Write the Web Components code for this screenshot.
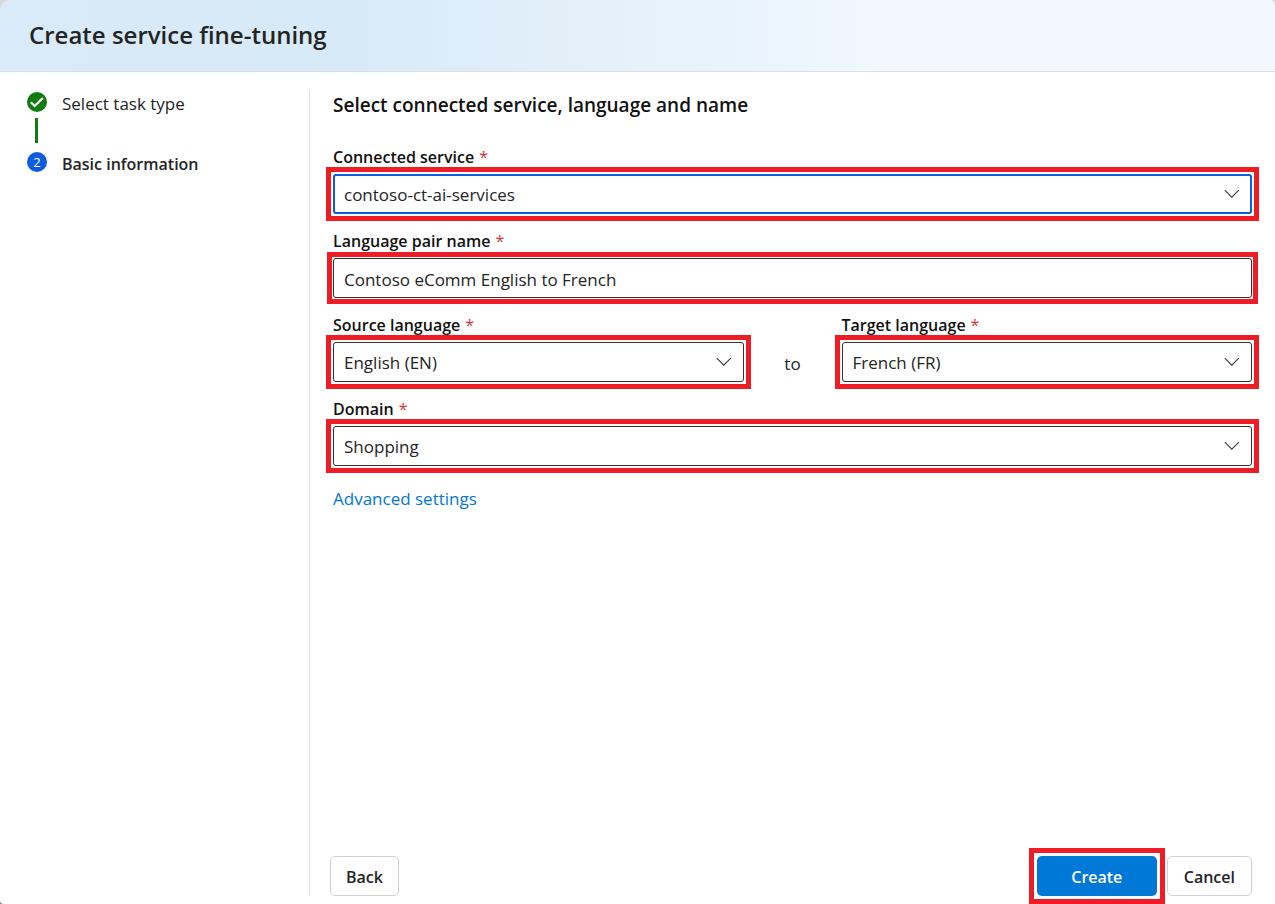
<!DOCTYPE html>
<html lang="en">
<head>
<meta charset="utf-8">
<title>Create service fine-tuning</title>
<style>
  html, body { margin: 0; height: 100%; }
  body {
    background: linear-gradient(#dcdad9, #8c8c8c);
    font-family: "Open Sans", "Noto Sans", sans-serif;
    font-size: 17px;
    line-height: 20px;
    color: #242424;
  }
</style>
</head>
<body>
<wizard-dialog heading="Create service fine-tuning">
  <wizard-step slot="steps" state="done" number="1">Select task type</wizard-step>
  <wizard-step slot="steps" state="current" number="2">Basic information</wizard-step>
  <service-form></service-form>
  <wizard-footer slot="footer"></wizard-footer>
</wizard-dialog>

<script>
class ShadowElement extends HTMLElement {
  connectedCallback() {
    if (!this.shadowRoot) this.attachShadow({ mode: "open" }).innerHTML = this.template();
  }
}

customElements.define("wizard-dialog", class extends ShadowElement {
  template() {
    return `
      <style>
        :host { display: flex; flex-direction: column; min-height: 100vh; box-sizing: border-box;
                background: #fff; border-radius: 12px 6px 0 4px; overflow: hidden; }
        header { padding: 19px 29px 20px; border-bottom: 1px solid #dcdfe2;
                 background: linear-gradient(90deg, #d9eaf8 0%, #d7eaf8 27%, #e6f1fa 50%, #ecf5fd 62%, #f2f7ff 69%); }
        h1 { margin: 0; font-size: 24px; line-height: 32px; font-weight: 600; }
        .body { flex: 1; display: grid; grid-template-columns: 309px 1fr; padding: 18px 0 8px; }
        nav { padding: 4px 27px; }
        main { display: flex; flex-direction: column; justify-content: space-between;
               border-left: 1px solid #e0e0e0; padding: 0 23px 0 20px; }
      </style>
      <header><h1>${this.getAttribute("heading")}</h1></header>
      <div class="body">
        <nav aria-label="Steps"><slot name="steps"></slot></nav>
        <main><slot></slot><slot name="footer"></slot></main>
      </div>`;
  }
});

customElements.define("wizard-step", class extends ShadowElement {
  template() {
    const done = this.getAttribute("state") === "done";
    const mark = done
      ? `<svg viewBox="0 0 20 20" width="20" height="20" aria-hidden="true"><path d="M3.8 10.2 7.7 14 15.8 6" fill="none" stroke="#fff" stroke-width="2.3"/></svg>`
      : this.getAttribute("number");
    return `
      <style>
        :host { display: grid; grid-template-columns: 20px 1fr; column-gap: 15px; }
        :host([state="current"]) { font-size: 16px; font-weight: 600; }
        .mark { width: 20px; height: 20px; border-radius: 50%; background: #0c5ce0; color: #fff;
                font-size: 13px; font-weight: 400; text-align: center; margin-top: -2px; }
        :host([state="done"]) .mark { background: #107c10; }
        svg { display: block; }
        .line { width: 3px; height: 25px; background: #107c10; margin: 4px auto 11px 8px; }
      </style>
      <span class="mark">${mark}</span><span><slot></slot></span>
      ${done ? `<span class="line"></span>` : ""}`;
  }
});

class FormField extends ShadowElement {
  template() {
    return `
      <style>
        :host { display: block; }
        label { display: block; margin-bottom: 7px; font-size: 16px; font-weight: 600; color: #111; white-space: nowrap; }
        .req { color: #d13438; font-weight: 400; margin-left: 5px; }
        .box { position: relative; }
        .box::after { content: ""; position: absolute; inset: calc(-5px - var(--ring-gap, 2px));
                      border: 5px solid #ee1c25; pointer-events: none; }
        select, input { display: block; appearance: none; box-sizing: border-box; width: 100%; height: 40px;
                 margin: 0; padding: 2px 10px 0; border: 1px solid #323130; border-radius: 3px; outline: 0;
                 background: #fff; font: inherit; color: #242424; }
        :host([active]) select { border: 2px solid #0c5ce0; padding: 2px 9px 0; }
        svg { position: absolute; right: 12px; top: 12px; pointer-events: none; }
      </style>
      <label for="control">${this.getAttribute("label")}<span class="req">*</span></label>
      <div class="box">${this.control()}</div>`;
  }
}

customElements.define("select-field", class extends FormField {
  control() {
    return `<select id="control" required><option>${this.getAttribute("value")}</option></select>
      <svg width="16" height="16" viewBox="0 0 16 16" aria-hidden="true"><path d="M.8 4.2 7.8 11.2 14.8 4.2" fill="none" stroke="#3b3a39" stroke-width="1.1"/></svg>`;
  }
});

customElements.define("text-field", class extends FormField {
  control() {
    return `<input id="control" type="text" required value="${this.getAttribute("value")}">`;
  }
});

customElements.define("service-form", class extends ShadowElement {
  template() {
    return `
      <style>
        :host { display: block; padding-left: 3px; }
        h2 { margin: 5px 0 32px; font-size: 19px; line-height: 20px; font-weight: 600; color: #111; }
        form { display: grid; gap: 17px; }
        .pair { display: grid; grid-template-columns: 1fr 98px 1fr; }
        .to { text-align: center; align-self: end; line-height: 36px; }
        .snug { --ring-gap: 1px; }
        a { justify-self: start; margin-top: 6px; color: #0078d4; text-decoration: none; }
      </style>
      <h2>Select connected service, language and name</h2>
      <form>
        <select-field label="Connected service" value="contoso-ct-ai-services" active></select-field>
        <text-field class="snug" label="Language pair name" value="Contoso eComm English to French"></text-field>
        <div class="pair">
          <select-field label="Source language" value="English (EN)"></select-field>
          <span class="to">to</span>
          <select-field label="Target language" value="French (FR)"></select-field>
        </div>
        <select-field label="Domain" value="Shopping"></select-field>
        <a href="#advanced">Advanced settings</a>
      </form>`;
  }
});

customElements.define("wizard-footer", class extends ShadowElement {
  template() {
    return `
      <style>
        :host { display: flex; gap: 10px; }
        button { height: 40px; margin: 0; padding: 2px 15px 0; border: 1px solid #d1d1d1; border-radius: 5px;
                 background: #fff; color: #242424; font: inherit; font-size: 16px; font-weight: 600; }
        .create { position: relative; min-width: 120px; margin-left: auto; border: 0; background: #0078d7; color: #fff; }
        .create::after { content: ""; position: absolute; inset: -8px; border: 5px solid #ee1c25; }
        .cancel { padding: 2px 16px 0; }
      </style>
      <button type="button">Back</button>
      <button type="submit" class="create">Create</button>
      <button type="button" class="cancel">Cancel</button>`;
  }
});
</script>
</body>
</html>
